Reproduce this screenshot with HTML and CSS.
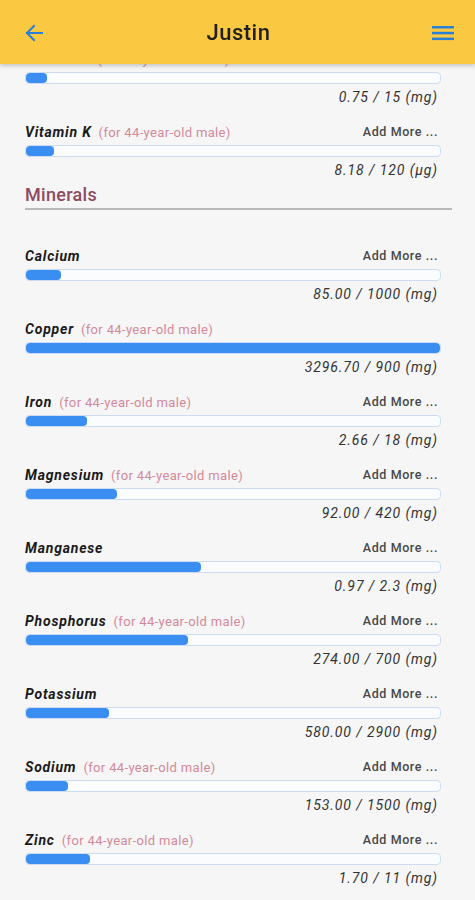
FILE: index.html
```html
<!DOCTYPE html>
<html lang="en">
<head>
  <meta charset="UTF-8" />
  <meta name="viewport" content="width=device-width, initial-scale=1.0"/>
  <title>Justin – Nutrients</title>
  <link rel="stylesheet" href="styles.css">
</head>
<body>
  <header class="appbar">
    <button class="icon-btn back-btn" aria-label="Back">
      <svg width="20" height="20" viewBox="0 0 20 20">
        <path d="M18 10H3M10 3L3 10l7 7" fill="none" stroke="#2a7fd6" stroke-width="2" stroke-linecap="square"/>
      </svg>
    </button>
    <h1 class="title">Justin</h1>
    <button class="icon-btn menu-btn" aria-label="Menu">
      <svg width="22" height="15" viewBox="0 0 22 15">
        <rect x="0" y="0" width="22" height="2.5" fill="#2a7fd6"/>
        <rect x="0" y="5.8" width="22" height="2.5" fill="#2a7fd6"/>
        <rect x="0" y="11.6" width="22" height="2.5" fill="#2a7fd6"/>
      </svg>
    </button>
  </header>

  <main class="content">
    <div class="nutrient">
      <div class="nutrient-head">
        <span class="name">Vitamin E</span><span class="note">(for 44-year-old male)</span>
        <a class="add-more">Add More ...</a>
      </div>
      <div class="bar"><div class="fill" style="width: 5%"></div></div>
      <div class="amount">0.75 / 15 (mg)</div>
    </div>

    <div class="nutrient">
      <div class="nutrient-head">
        <span class="name">Vitamin K</span><span class="note">(for 44-year-old male)</span>
        <a class="add-more">Add More ...</a>
      </div>
      <div class="bar"><div class="fill" style="width: 6.8%"></div></div>
      <div class="amount">8.18 / 120 (µg)</div>
    </div>

    <h2 class="section-title">Minerals</h2>

    <div class="nutrient">
      <div class="nutrient-head">
        <span class="name">Calcium</span>
        <a class="add-more">Add More ...</a>
      </div>
      <div class="bar"><div class="fill" style="width: 8.5%"></div></div>
      <div class="amount">85.00 / 1000 (mg)</div>
    </div>

    <div class="nutrient">
      <div class="nutrient-head">
        <span class="name">Copper</span><span class="note">(for 44-year-old male)</span>
      </div>
      <div class="bar"><div class="fill" style="width: 100%"></div></div>
      <div class="amount">3296.70 / 900 (mg)</div>
    </div>

    <div class="nutrient">
      <div class="nutrient-head">
        <span class="name">Iron</span><span class="note">(for 44-year-old male)</span>
        <a class="add-more">Add More ...</a>
      </div>
      <div class="bar"><div class="fill" style="width: 14.8%"></div></div>
      <div class="amount">2.66 / 18 (mg)</div>
    </div>

    <div class="nutrient">
      <div class="nutrient-head">
        <span class="name">Magnesium</span><span class="note">(for 44-year-old male)</span>
        <a class="add-more">Add More ...</a>
      </div>
      <div class="bar"><div class="fill" style="width: 21.9%"></div></div>
      <div class="amount">92.00 / 420 (mg)</div>
    </div>

    <div class="nutrient">
      <div class="nutrient-head">
        <span class="name">Manganese</span>
        <a class="add-more">Add More ...</a>
      </div>
      <div class="bar"><div class="fill" style="width: 42.2%"></div></div>
      <div class="amount">0.97 / 2.3 (mg)</div>
    </div>

    <div class="nutrient">
      <div class="nutrient-head">
        <span class="name">Phosphorus</span><span class="note">(for 44-year-old male)</span>
        <a class="add-more">Add More ...</a>
      </div>
      <div class="bar"><div class="fill" style="width: 39.1%"></div></div>
      <div class="amount">274.00 / 700 (mg)</div>
    </div>

    <div class="nutrient">
      <div class="nutrient-head">
        <span class="name">Potassium</span>
        <a class="add-more">Add More ...</a>
      </div>
      <div class="bar"><div class="fill" style="width: 20%"></div></div>
      <div class="amount">580.00 / 2900 (mg)</div>
    </div>

    <div class="nutrient">
      <div class="nutrient-head">
        <span class="name">Sodium</span><span class="note">(for 44-year-old male)</span>
        <a class="add-more">Add More ...</a>
      </div>
      <div class="bar"><div class="fill" style="width: 10.2%"></div></div>
      <div class="amount">153.00 / 1500 (mg)</div>
    </div>

    <div class="nutrient">
      <div class="nutrient-head">
        <span class="name">Zinc</span><span class="note">(for 44-year-old male)</span>
        <a class="add-more">Add More ...</a>
      </div>
      <div class="bar"><div class="fill" style="width: 15.5%"></div></div>
      <div class="amount">1.70 / 11 (mg)</div>
    </div>
  </main>
</body>
</html>
```

FILE: styles.css
```css
body {
  font-family: Roboto, 'Noto Sans', sans-serif;
  background-color: #f6f6f6;
  margin: 0;
  color: #1c1c1c;
}
.appbar {
  position: fixed;
  top: 0;
  left: 0;
  right: 0;
  height: 64px;
  z-index: 10;
  background-color: #fbc841;
  box-shadow: 0 2px 4px rgba(0, 0, 0, 0.2);
  display: flex;
  align-items: center;
  justify-content: space-between;
  padding: 0 21px 0 23px;
}
.icon-btn {
  background: none;
  border: none;
  padding: 0;
  width: 22px;
  height: 22px;
  display: flex;
  align-items: center;
  justify-content: center;
}
.back-btn {
  margin-top: 2px;
}
.menu-btn {
  margin-top: 3px;
}
.title {
  margin: 0;
  font-size: 22px;
  font-weight: 500;
  letter-spacing: 0.5px;
  color: #1f1f1f;
}
.content {
  padding: 49px 23px 20px 25px;
}
.nutrient {
  margin-right: 11px;
  margin-bottom: 15px;
}
.nutrient-head {
  display: flex;
  align-items: baseline;
  height: 20px;
  line-height: 20px;
  padding-right: 3px;
}
.name {
  font-size: 14px;
  font-weight: bold;
  font-style: italic;
  letter-spacing: 0.8px;
  color: #1a1a1a;
}
.note {
  font-size: 13px;
  color: #d3899b;
  letter-spacing: 0.35px;
  margin-left: 7px;
}
.add-more {
  margin-left: auto;
  font-size: 12.5px;
  font-weight: 500;
  letter-spacing: 0.6px;
  color: #484848;
  position: relative;
  top: -1px;
}
.bar {
  margin-top: 3px;
  height: 12px;
  box-sizing: border-box;
  border: 1px solid #cbdcf2;
  border-radius: 4px;
  background-color: #fbfcfe;
  overflow: hidden;
}
.fill {
  height: 100%;
  background-color: #3a8ef1;
  border-radius: 4px;
}
.amount {
  margin-top: 3px;
  line-height: 20px;
  text-align: right;
  padding-right: 3px;
  font-size: 14px;
  font-style: italic;
  letter-spacing: 0.9px;
  color: #333;
}
.section-title {
  margin: -12px 0 0 0;
  font-size: 18px;
  line-height: 24px;
  font-weight: 500;
  letter-spacing: 0.3px;
  color: #8c4b5e;
  padding-bottom: 1px;
  border-bottom: 2.5px solid #b9b9b9;
  margin-bottom: 36px;
}
```
